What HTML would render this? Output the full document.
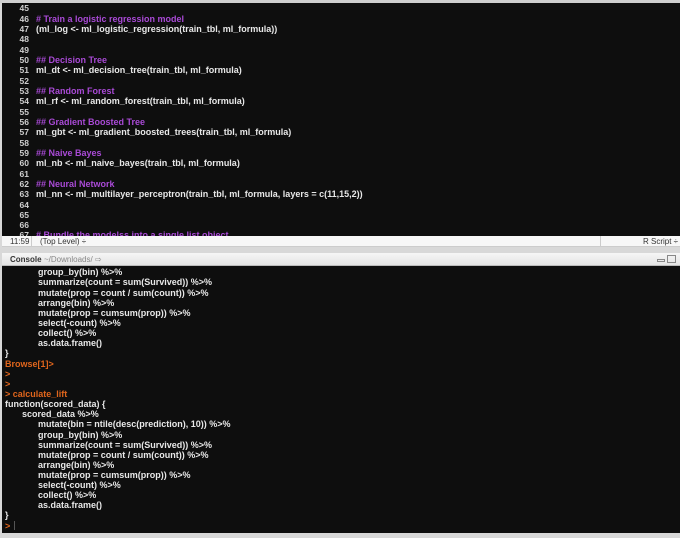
<!DOCTYPE html>
<html><head><meta charset="utf-8"><style>
*{margin:0;padding:0;box-sizing:border-box}
body{width:680px;height:538px;background:#d8d8d8;position:relative;overflow:hidden;font-family:"Liberation Sans",sans-serif}
.ed{position:absolute;left:2px;top:3px;width:678px;height:233px;background:#0e0e0e;overflow:hidden}
.ln{position:absolute;left:0;width:27px;text-align:right;color:#cfcfcf;font-weight:bold;font-size:8.5px;line-height:10px}
.cd{position:absolute;left:34px;color:#e8e8e8;font-weight:bold;font-size:9px;line-height:10px;white-space:pre}
.cm{color:#a94ad6}
.status{position:absolute;left:2px;top:236px;width:678px;height:11px;background:#f7f7f7;border-bottom:1px solid #ccc;font-size:8px;color:#333;white-space:nowrap}
.ch{position:absolute;left:2px;top:253px;width:678px;height:13px;background:linear-gradient(#f6f6f6,#e4e4e4);border-bottom:1px solid #bbb;font-size:8px;white-space:nowrap}
.con{position:absolute;left:2px;top:266px;width:678px;height:267px;background:#0e0e0e;overflow:hidden}
.c{position:absolute;color:#e8e8e8;font-weight:bold;font-size:9px;line-height:10px;white-space:pre}
.o{color:#e0651c}
</style></head><body>
<div style="position:absolute;left:0;top:0;width:680px;height:3px;background:#cfcfcf"></div>
<div class="ed">
<div class="ln" style="top:0px">45</div>
<div class="ln" style="top:11px">46</div><div class="cd cm" style="top:11px"># Train a logistic regression model</div>
<div class="ln" style="top:21px">47</div><div class="cd" style="top:21px">(ml_log &lt;- ml_logistic_regression(train_tbl, ml_formula))</div>
<div class="ln" style="top:31px">48</div>
<div class="ln" style="top:42px">49</div>
<div class="ln" style="top:52px">50</div><div class="cd cm" style="top:52px">## Decision Tree</div>
<div class="ln" style="top:62px">51</div><div class="cd" style="top:62px">ml_dt &lt;- ml_decision_tree(train_tbl, ml_formula)</div>
<div class="ln" style="top:73px">52</div>
<div class="ln" style="top:83px">53</div><div class="cd cm" style="top:83px">## Random Forest</div>
<div class="ln" style="top:93px">54</div><div class="cd" style="top:93px">ml_rf &lt;- ml_random_forest(train_tbl, ml_formula)</div>
<div class="ln" style="top:104px">55</div>
<div class="ln" style="top:114px">56</div><div class="cd cm" style="top:114px">## Gradient Boosted Tree</div>
<div class="ln" style="top:124px">57</div><div class="cd" style="top:124px">ml_gbt &lt;- ml_gradient_boosted_trees(train_tbl, ml_formula)</div>
<div class="ln" style="top:135px">58</div>
<div class="ln" style="top:145px">59</div><div class="cd cm" style="top:145px">## Naive Bayes</div>
<div class="ln" style="top:155px">60</div><div class="cd" style="top:155px">ml_nb &lt;- ml_naive_bayes(train_tbl, ml_formula)</div>
<div class="ln" style="top:166px">61</div>
<div class="ln" style="top:176px">62</div><div class="cd cm" style="top:176px">## Neural Network</div>
<div class="ln" style="top:186px">63</div><div class="cd" style="top:186px">ml_nn &lt;- ml_multilayer_perceptron(train_tbl, ml_formula, layers = c(11,15,2))</div>
<div class="ln" style="top:197px">64</div>
<div class="ln" style="top:207px">65</div>
<div class="ln" style="top:217px">66</div>
<div class="ln" style="top:227px">67</div><div class="cd cm" style="top:227px"># Bundle the modelss into a single list object</div>
</div>
<div class="status"><span style="position:absolute;left:8px;top:1px">11:59</span><span style="position:absolute;left:29px;top:0;width:1px;height:11px;background:#ccc"></span><span style="position:absolute;left:38px;top:1px">(Top Level) ÷</span><span style="position:absolute;left:598px;top:0;width:1px;height:11px;background:#ccc"></span><span style="position:absolute;left:641px;top:1px">R Script ÷</span></div>
<div class="ch"><span style="position:absolute;left:8px;top:2px;font-weight:bold;color:#333">Console</span><span style="position:absolute;left:42px;top:2px;color:#888">~/Downloads/ ⇨</span>
<span style="position:absolute;left:655px;top:6px;width:8px;height:3px;border:1px solid #888"></span><span style="position:absolute;left:665px;top:2px;width:9px;height:8px;border:1px solid #888"></span></div>
<div class="con">
<div class="c" style="left:36px;top:1px">group_by(bin) %&gt;%</div>
<div class="c" style="left:36px;top:11px">summarize(count = sum(Survived)) %&gt;%</div>
<div class="c" style="left:36px;top:22px">mutate(prop = count / sum(count)) %&gt;%</div>
<div class="c" style="left:36px;top:32px">arrange(bin) %&gt;%</div>
<div class="c" style="left:36px;top:42px">mutate(prop = cumsum(prop)) %&gt;%</div>
<div class="c" style="left:36px;top:52px">select(-count) %&gt;%</div>
<div class="c" style="left:36px;top:62px">collect() %&gt;%</div>
<div class="c" style="left:36px;top:72px">as.data.frame()</div>
<div class="c" style="left:3px;top:82px">}</div>
<div class="c o" style="left:3px;top:93px">Browse[1]&gt;</div>
<div class="c o" style="left:3px;top:103px">&gt;</div>
<div class="c o" style="left:3px;top:113px">&gt;</div>
<div class="c o" style="left:3px;top:123px">&gt; calculate_lift</div>
<div class="c" style="left:3px;top:133px">function(scored_data) {</div>
<div class="c" style="left:20px;top:143px">scored_data %&gt;%</div>
<div class="c" style="left:36px;top:153px">mutate(bin = ntile(desc(prediction), 10)) %&gt;%</div>
<div class="c" style="left:36px;top:164px">group_by(bin) %&gt;%</div>
<div class="c" style="left:36px;top:174px">summarize(count = sum(Survived)) %&gt;%</div>
<div class="c" style="left:36px;top:184px">mutate(prop = count / sum(count)) %&gt;%</div>
<div class="c" style="left:36px;top:194px">arrange(bin) %&gt;%</div>
<div class="c" style="left:36px;top:204px">mutate(prop = cumsum(prop)) %&gt;%</div>
<div class="c" style="left:36px;top:214px">select(-count) %&gt;%</div>
<div class="c" style="left:36px;top:224px">collect() %&gt;%</div>
<div class="c" style="left:36px;top:234px">as.data.frame()</div>
<div class="c" style="left:3px;top:244px">}</div>
<div class="c o" style="left:3px;top:255px">&gt;</div>
<div style="position:absolute;left:12px;top:255px;width:1px;height:9px;background:#555"></div>
</div>
</body></html>
